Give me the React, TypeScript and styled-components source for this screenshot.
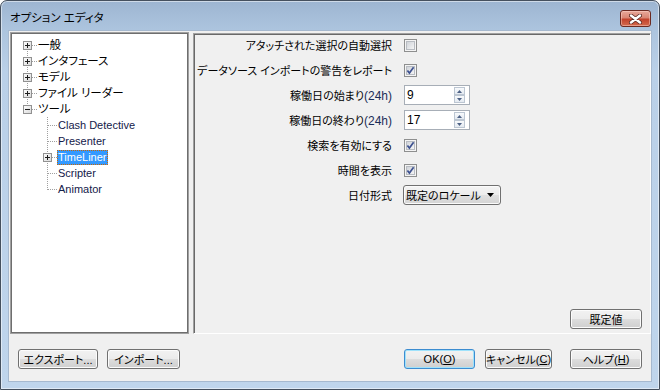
import React from 'react';
import styled, { createGlobalStyle } from 'styled-components';

const GlobalStyle = createGlobalStyle`
  html, body {
    margin: 0;
    padding: 0;
    background: #ffffff;
  }
  body {
    font-family: "Liberation Sans", "Noto Sans CJK JP", sans-serif;
    font-size: 11px;
    color: #000;
    font-feature-settings: "palt";
  }
`;

const Window = styled.div`
  width: 660px;
  height: 390px;
  box-sizing: border-box;
  border: 1px solid #45505e;
  border-radius: 7px 7px 0 0;
  background: linear-gradient(180deg, #9db5d1 0px, #acc4de 28px, #bad0e8 70px, #bfd5ec 100%);
  box-shadow: inset 0 0 0 1px rgba(255, 255, 255, 0.5);
  display: flex;
  flex-direction: column;
  overflow: hidden;
`;

const TitleBar = styled.div`
  height: 29px;
  box-sizing: border-box;
  padding: 6px 8px 0 9px;
  display: flex;
  align-items: flex-start;
  justify-content: space-between;
`;

const Title = styled.span`
  font-size: 11.5px;
  line-height: 23px;
  color: #000;
`;

const CloseButton = styled.div`
  width: 31px;
  height: 17px;
  margin-top: 3px;
  box-sizing: border-box;
  border: 1px solid #6b2a22;
  border-radius: 3px;
  background: linear-gradient(180deg, #e8a89a 0%, #d98674 45%, #c2422c 55%, #d36a4e 100%);
  box-shadow: inset 0 0 0 1px rgba(255, 220, 210, 0.45);
  display: flex;
  align-items: center;
  justify-content: center;
`;

const Client = styled.div`
  flex: 1;
  margin: 0 7px 7px 7px;
  background: #f0f0f0;
  border: 1px solid #a6b9cf;
  display: flex;
  flex-direction: column;
  padding: 1px 0 0 1px;
`;

const MainRow = styled.div`
  display: flex;
  gap: 4px;
  height: 302px;
`;

const TreePanel = styled.div`
  width: 179px;
  box-sizing: border-box;
  background: #fff;
  border: 1px solid #a0a0a0;
  box-shadow: inset 0 0 0 1px #6e6e6e;
  padding: 4px 0 0 6px;
`;

const TreeRow = styled.div`
  display: flex;
  align-items: center;
  height: 16px;
`;

const NodeLabel = styled.span<{ $latin?: boolean; $selected?: boolean }>`
  font-size: ${(p) => (p.$latin ? '11px' : '11.5px')};
  line-height: 15px;
  height: 15px;
  padding: 0 1px;
  white-space: nowrap;
  color: ${(p) => (p.$selected ? '#fff' : p.$latin ? '#14204a' : '#000')};
  background: ${(p) => (p.$selected ? '#3399ff' : 'transparent')};
  outline: ${(p) => (p.$selected ? '1px dotted #cc6600' : 'none')};
  outline-offset: -1px;
`;

const SettingsPanel = styled.div`
  flex: 1;
  display: flex;
  flex-direction: column;
  border-top: 1px solid #a0a0a0;
  border-left: 1px solid #a0a0a0;
  border-right: 1px solid #ffffff;
  border-bottom: 1px solid #ffffff;
  box-shadow: inset 1px 1px 0 #696969;
  margin-top: 1px;
  padding: 1px 8px 4px 0;
`;

const SettingsGrid = styled.div`
  display: grid;
  grid-template-columns: 198px auto;
  grid-auto-rows: 20px;
  row-gap: 5px;
  column-gap: 12px;
  align-items: center;
  justify-items: start;
`;

const Label = styled.span`
  justify-self: end;
  font-size: 11px;
  white-space: nowrap;
  color: #000;
`;

const Unit = styled.span`
  font-size: 12px;
  color: #1b2c58;
`;

const ControlCell = styled.div`
  display: flex;
  align-items: center;
`;

const SpinBox = styled.div`
  width: 66px;
  height: 20px;
  box-sizing: border-box;
  border: 1px solid #a7aeb7;
  background: #fff;
  display: flex;
  align-items: center;
  padding: 0 4px 0 2px;
`;

const SpinValue = styled.span`
  flex: 1;
  font-size: 12px;
`;

const SpinButtons = styled.div`
  display: flex;
  flex-direction: column;
  width: 11px;
  height: 16px;
`;

const SpinButton = styled.div`
  flex: 1;
  box-sizing: border-box;
  border: 1px solid #bcc6d2;
  background: linear-gradient(180deg, #f8fafc 0%, #e4eaf1 100%);
  display: flex;
  align-items: center;
  justify-content: center;
`;

const Dropdown = styled.div`
  width: 98px;
  height: 20px;
  margin-left: -1px;
  box-sizing: border-box;
  border: 1px solid #707070;
  border-radius: 3px;
  background: linear-gradient(180deg, #f4f4f4 0%, #ececec 50%, #e0e0e0 51%, #d4d4d4 100%);
  box-shadow: inset 0 0 0 1px #fbfbfb;
  display: flex;
  align-items: center;
  justify-content: space-between;
  padding: 0 6px 0 2px;
  font-size: 11px;
  white-space: nowrap;
`;

const Filler = styled.div`
  flex: 1;
`;

const PanelFooter = styled.div`
  display: flex;
  justify-content: flex-end;
`;

const Button = styled.div<{ $w: number; $default?: boolean }>`
  width: ${(p) => p.$w}px;
  height: 20px;
  box-sizing: border-box;
  border: 1px solid ${(p) => (p.$default ? '#3c8cd0' : '#707070')};
  border-radius: 3px;
  background: linear-gradient(180deg, #f2f2f2 0%, #ebebeb 50%, #dddddd 51%, #cfcfcf 100%);
  box-shadow: inset 0 0 0 1px ${(p) => (p.$default ? '#9fe2fb' : '#fcfcfc')};
  display: flex;
  align-items: center;
  justify-content: center;
  font-size: 11px;
  color: #000;
  white-space: nowrap;

  u {
    text-underline-offset: 1px;
  }
`;

const ButtonRow = styled.div`
  display: flex;
  justify-content: space-between;
  padding: 15px 9px 0 8px;
`;

const ButtonGroup = styled.div`
  display: flex;
  gap: 9px;
`;

const RightGroup = styled.div`
  display: flex;
  gap: 10px;

  & > :last-child {
    margin-left: 8px;
  }
`;

type Vert = 'none' | 'full' | 'top' | 'bottom';

const Connector = ({ vert, box, blank }: { vert?: Vert; box?: 'plus' | 'minus'; blank?: boolean }) => (
  <svg width="20" height="16" viewBox="0 0 20 16" style={{ flex: 'none' }}>
    <defs>
      <linearGradient id="boxFill" x1="0" y1="0" x2="1" y2="1">
        <stop offset="0" stopColor="#ffffff" />
        <stop offset="1" stopColor="#d8d8d8" />
      </linearGradient>
    </defs>
    {!blank && vert && vert !== 'none' && (
      <line
        x1="10.5"
        x2="10.5"
        y1={vert === 'bottom' ? 8 : 0}
        y2={vert === 'top' ? 9 : 16}
        stroke="#a0a0a0"
        strokeDasharray="1 1"
      />
    )}
    {!blank && (
      <line x1={box ? 15 : 11} x2="20" y1="8.5" y2="8.5" stroke="#a0a0a0" strokeDasharray="1 1" />
    )}
    {box && (
      <g>
        <rect x="6.5" y="4.5" width="8" height="8" fill="url(#boxFill)" stroke="#919191" />
        <line x1="8" x2="13" y1="8.5" y2="8.5" stroke="#1e1e1e" />
        {box === 'plus' && <line x1="10.5" x2="10.5" y1="6" y2="11" stroke="#1e1e1e" />}
      </g>
    )}
  </svg>
);

const Check = ({ checked }: { checked?: boolean }) => (
  <svg width="13" height="13" viewBox="0 0 13 13">
    <defs>
      <linearGradient id="chkFill" x1="0" y1="0" x2="1" y2="1">
        <stop offset="0" stopColor="#cdd1d7" />
        <stop offset="1" stopColor="#f7f7f7" />
      </linearGradient>
    </defs>
    <rect x="0.5" y="0.5" width="12" height="12" fill="#f4f4f4" stroke="#8e8f8f" />
    <rect x="2.5" y="2.5" width="8" height="8" fill="url(#chkFill)" stroke="#b8bcc2" />
    {checked && (
      <path d="M3.4 6.4 L5.4 9 L9.6 3.3" fill="none" stroke="#3e5290" strokeWidth="1.7" />
    )}
  </svg>
);

const Arrow = ({ up }: { up?: boolean }) => (
  <svg width="5" height="3" viewBox="0 0 5 3">
    <path d={up ? 'M0 3 L2.5 0 L5 3 Z' : 'M0 0 L5 0 L2.5 3 Z'} fill="#4d6185" />
  </svg>
);

const Spinner = ({ value }: { value: string }) => (
  <SpinBox>
    <SpinValue>{value}</SpinValue>
    <SpinButtons>
      <SpinButton>
        <Arrow up />
      </SpinButton>
      <SpinButton>
        <Arrow />
      </SpinButton>
    </SpinButtons>
  </SpinBox>
);

type Node = {
  text: string;
  cells: { vert?: Vert; box?: 'plus' | 'minus'; blank?: boolean }[];
  latin?: boolean;
  selected?: boolean;
};

const tree: Node[] = [
  { text: '一般', cells: [{ vert: 'bottom', box: 'plus' }] },
  { text: 'インタフェース', cells: [{ vert: 'full', box: 'plus' }] },
  { text: 'モデル', cells: [{ vert: 'full', box: 'plus' }] },
  { text: 'ファイル リーダー', cells: [{ vert: 'full', box: 'plus' }] },
  { text: 'ツール', cells: [{ vert: 'top', box: 'minus' }] },
  { text: 'Clash Detective', latin: true, cells: [{ blank: true }, { vert: 'full' }] },
  { text: 'Presenter', latin: true, cells: [{ blank: true }, { vert: 'full' }] },
  { text: 'TimeLiner', latin: true, selected: true, cells: [{ blank: true }, { vert: 'full', box: 'plus' }] },
  { text: 'Scripter', latin: true, cells: [{ blank: true }, { vert: 'full' }] },
  { text: 'Animator', latin: true, cells: [{ blank: true }, { vert: 'top' }] },
];

export default function App() {
  return (
    <>
      <GlobalStyle />
      <Window>
        <TitleBar>
          <Title>オプション エディタ</Title>
          <CloseButton>
            <svg width="13" height="10" viewBox="0 0 13 10">
              <path d="M2 1.5 L11 8.5 M11 1.5 L2 8.5" stroke="#5a2a24" strokeWidth="4" strokeLinecap="round" />
              <path d="M2 1.5 L11 8.5 M11 1.5 L2 8.5" stroke="#ffffff" strokeWidth="2.4" strokeLinecap="round" />
            </svg>
          </CloseButton>
        </TitleBar>
        <Client>
          <MainRow>
            <TreePanel>
              {tree.map((n) => (
                <TreeRow key={n.text}>
                  {n.cells.map((c, i) => (
                    <Connector key={i} {...c} />
                  ))}
                  <NodeLabel $latin={n.latin} $selected={n.selected}>
                    {n.text}
                  </NodeLabel>
                </TreeRow>
              ))}
            </TreePanel>
            <SettingsPanel>
              <SettingsGrid>
                <Label>アタッチされた選択の自動選択</Label>
                <ControlCell>
                  <Check />
                </ControlCell>
                <Label>データソース インポートの警告をレポート</Label>
                <ControlCell>
                  <Check checked />
                </ControlCell>
                <Label>
                  稼働日の始まり<Unit>(24h)</Unit>
                </Label>
                <ControlCell>
                  <Spinner value="9" />
                </ControlCell>
                <Label>
                  稼働日の終わり<Unit>(24h)</Unit>
                </Label>
                <ControlCell>
                  <Spinner value="17" />
                </ControlCell>
                <Label>検索を有効にする</Label>
                <ControlCell>
                  <Check checked />
                </ControlCell>
                <Label>時間を表示</Label>
                <ControlCell>
                  <Check checked />
                </ControlCell>
                <Label>日付形式</Label>
                <ControlCell>
                  <Dropdown>
                    <span>既定のロケール</span>
                    <svg width="7" height="4" viewBox="0 0 7 4">
                      <path d="M0 0 L7 0 L3.5 4 Z" fill="#000" />
                    </svg>
                  </Dropdown>
                </ControlCell>
              </SettingsGrid>
              <Filler />
              <PanelFooter>
                <Button $w={72}>既定値</Button>
              </PanelFooter>
            </SettingsPanel>
          </MainRow>
          <ButtonRow>
            <ButtonGroup>
              <Button $w={80}>エクスポート...</Button>
              <Button $w={73}>インポート...</Button>
            </ButtonGroup>
            <RightGroup>
              <Button $w={71} $default>
                OK(<u>O</u>)
              </Button>
              <Button $w={67}>
                キャンセル(<u>C</u>)
              </Button>
              <Button $w={72}>
                ヘルプ(<u>H</u>)
              </Button>
            </RightGroup>
          </ButtonRow>
        </Client>
      </Window>
    </>
  );
}
